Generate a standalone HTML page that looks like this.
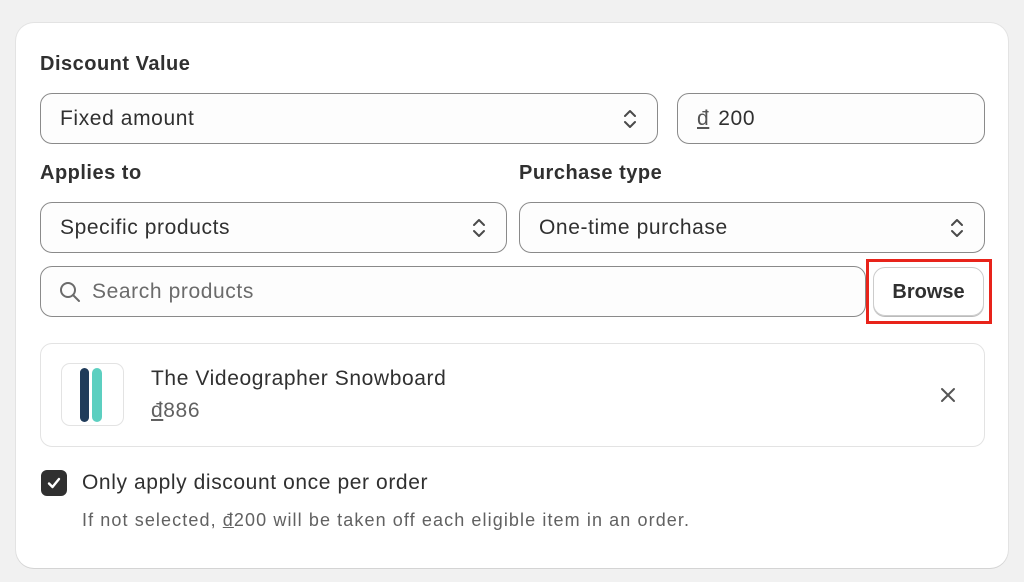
<!DOCTYPE html>
<html><head><style>
body{margin:0;width:1024px;height:582px;background:#f1f1f1;font-family:"Liberation Sans",sans-serif;color:#303030;position:relative;overflow:hidden}
.card{position:absolute;left:16px;top:23px;width:992px;height:545px;background:#fff;border-radius:18px;box-shadow:0 1px 0 #d4d4d4,0 0 0 1px #e3e3e3}
.a{position:absolute}
.lbl{font-size:20px;font-weight:bold;color:#303030;letter-spacing:0.5px}
.box{position:absolute;border:1px solid #8a8a8a;border-radius:12px;background:#fdfdfd;box-sizing:border-box;font-size:21px;letter-spacing:0.6px;display:flex;align-items:center;padding-left:19px;padding-top:1px}
.chev{position:absolute;right:20px;top:14px}
</style></head><body>
<div class="card"></div>
<div class="a lbl" style="left:40px;top:53px">Discount Value</div>
<div class="box" style="left:40px;top:93px;width:618px;height:51px">Fixed amount<svg class="chev" width="14" height="22" viewBox="0 0 14 22"><path d="M2 8l5-5 5 5M2 14l5 5 5-5" fill="none" stroke="#4a4a4a" stroke-width="2" stroke-linecap="round" stroke-linejoin="round"/></svg></div>
<div class="box" style="left:677px;top:93px;width:308px;height:51px"><span style="color:#555;text-decoration:underline;margin-right:9px">đ</span>200</div>
<div class="a lbl" style="left:40px;top:162px">Applies to</div>
<div class="a lbl" style="left:519px;top:162px">Purchase type</div>
<div class="box" style="left:40px;top:202px;width:467px;height:51px">Specific products<svg class="chev" width="14" height="22" viewBox="0 0 14 22"><path d="M2 8l5-5 5 5M2 14l5 5 5-5" fill="none" stroke="#4a4a4a" stroke-width="2" stroke-linecap="round" stroke-linejoin="round"/></svg></div>
<div class="box" style="left:519px;top:202px;width:466px;height:51px">One-time purchase<svg class="chev" width="14" height="22" viewBox="0 0 14 22"><path d="M2 8l5-5 5 5M2 14l5 5 5-5" fill="none" stroke="#4a4a4a" stroke-width="2" stroke-linecap="round" stroke-linejoin="round"/></svg></div>
<div class="box" style="left:40px;top:266px;width:826px;height:51px;padding-left:18px;color:#6b6b6b"><svg width="22" height="22" viewBox="0 0 22 22" style="margin-right:11px;margin-top:-1px"><circle cx="9" cy="9" r="7" fill="none" stroke="#6b6b6b" stroke-width="2"/><path d="M14 14l6 6" stroke="#6b6b6b" stroke-width="2" stroke-linecap="round"/></svg>Search products</div>
<div class="a" style="left:866px;top:259px;width:126px;height:65px;border:3px solid #e8231a;box-sizing:border-box"></div>
<div class="a" style="left:873px;top:267px;width:111px;height:49px;border:1px solid #ccc;border-radius:12px;box-shadow:0 1px 0 #bbb;box-sizing:border-box;font-size:20px;font-weight:bold;display:flex;align-items:center;justify-content:center;padding-top:1px">Browse</div>
<div class="a" style="left:40px;top:343px;width:945px;height:104px;border:1px solid #e3e3e3;border-radius:12px;box-sizing:border-box"></div>
<div class="a" style="left:61px;top:363px;width:63px;height:63px;border:1px solid #e3e3e3;border-radius:9px;box-sizing:border-box">
<div class="a" style="left:18px;top:4px;width:9px;height:54px;background:#1f3b5a;border-radius:5px"></div>
<div class="a" style="left:30px;top:4px;width:10px;height:54px;background:#5ccfc0;border-radius:5px"></div></div>
<div class="a" style="left:151px;top:367px;font-size:21px;letter-spacing:0.6px">The Videographer Snowboard</div>
<div class="a" style="left:151px;top:399px;font-size:21px;color:#616161;letter-spacing:0.6px"><u>đ</u>886</div>
<svg class="a" style="left:940px;top:387px" width="16" height="16" viewBox="0 0 16 16"><path d="M2 2l12 12M14 2L2 14" stroke="#555" stroke-width="2" stroke-linecap="round"/></svg>
<div class="a" style="left:41px;top:470px;width:26px;height:26px;background:#303030;border-radius:6px"><svg width="26" height="26" viewBox="0 0 26 26"><path d="M8 13.5l3.5 3.5 6.5-8" fill="none" stroke="#fff" stroke-width="2.4" stroke-linecap="round" stroke-linejoin="round"/></svg></div>
<div class="a" style="left:82px;top:471px;font-size:21px;letter-spacing:0.6px">Only apply discount once per order</div>
<div class="a" style="left:82px;top:510px;font-size:18px;color:#616161;letter-spacing:1.1px">If not selected, <u>đ</u>200 will be taken off each eligible item in an order.</div>
</body></html>
